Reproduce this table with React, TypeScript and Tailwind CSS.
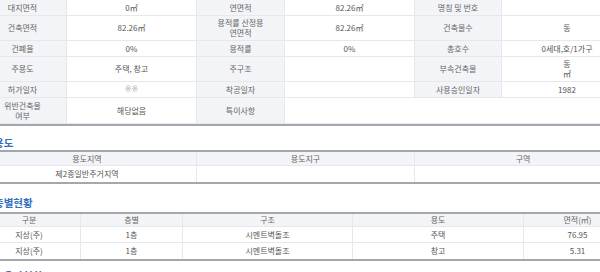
const font = {
  fontFamily: '"Noto Sans CJK KR", "Noto Sans", sans-serif',
};

const labelCls =
  "flex items-center justify-center text-center bg-[#f3f4f7] border-b border-r border-[#e7e8eb] text-[#666] leading-[10px]";
const valueCls =
  "flex items-center justify-center text-center bg-white border-b border-r border-[#e7e8eb] text-[#555] leading-[10px]";

function Label({ children }: { children: React.ReactNode }) {
  return <div className={labelCls}>{children}</div>;
}

function Value({
  children,
  span,
}: {
  children?: React.ReactNode;
  span?: boolean;
}) {
  return (
    <div className={span ? valueCls + " col-span-3" : valueCls}>{children}</div>
  );
}

function Heading({ children }: { children: React.ReactNode }) {
  return (
    <div className="ml-[-6px] text-[10.5px] font-bold leading-[14px] text-[#3470bd]">
      {children}
    </div>
  );
}

const zoneCols = ["용도지역", "용도지구", "구역"];
const zoneRow = ["제2종일반주거지역", "", ""];

const floorHead = ["구분", "층별", "구조", "용도", "면적(㎡)"];
const floorRows = [
  ["지상(주)", "1층", "시멘트벽돌조", "주택", "76.95"],
  ["지상(주)", "1층", "시멘트벽돌조", "창고", "5.31"],
];

export default function App() {
  return (
    <div
      className="h-[272px] w-[600px] overflow-hidden bg-white text-[8px]"
      style={font}
    >
      {/* 건축물 개요 */}
      <div className="ml-[-21px] w-[654px] border-b-2 border-[#a4a8ae]">
        <div className="grid grid-cols-[88px_130px_88px_130px_87px_131px] grid-rows-[16px_25px_16px_25px_16px_26px]">
          <Label>대지면적</Label>
          <Value>0㎡</Value>
          <Label>연면적</Label>
          <Value>82.26㎡</Value>
          <Label>명칭 및 번호</Label>
          <Value />

          <Label>건축면적</Label>
          <Value>82.26㎡</Value>
          <Label>
            용적률 산정용
            <br />
            연면적
          </Label>
          <Value>82.26㎡</Value>
          <Label>건축물수</Label>
          <Value>동</Value>

          <Label>건폐율</Label>
          <Value>0%</Value>
          <Label>용적률</Label>
          <Value>0%</Value>
          <Label>총호수</Label>
          <Value>0세대,호/1가구</Value>

          <Label>주용도</Label>
          <Value>주택, 창고</Value>
          <Label>주구조</Label>
          <Value />
          <Label>부속건축물</Label>
          <Value>
            동
            <br />㎡
          </Value>

          <Label>허가일자</Label>
          <Value>
            <span className="font-['DejaVu_Sans'] text-[#b5b5b5]">※※</span>
          </Value>
          <Label>착공일자</Label>
          <Value />
          <Label>사용승인일자</Label>
          <Value>1982</Value>

          <Label>
            위반건축물
            <br />
            여부
          </Label>
          <Value>해당없음</Value>
          <Label>특이사항</Label>
          <Value span />
        </div>
      </div>

      {/* 용도 */}
      <div className="pt-[10px]">
        <Heading>용도</Heading>
      </div>
      <div className="ml-[-22px] w-[654px] border-y-2 border-[#a4a8ae]">
        <div className="grid grid-cols-[219px_218px_217px] grid-rows-[14px_16px]">
          {zoneCols.map((c) => (
            <Label key={c}>{c}</Label>
          ))}
          {zoneRow.map((c, i) => (
            <div key={i} className={valueCls + " border-b-0"}>
              {c}
            </div>
          ))}
        </div>
      </div>

      {/* 층별현황 */}
      <div className="pt-[12px] pb-[2px]">
        <Heading>층별현황</Heading>
      </div>
      <div className="ml-[-22px] w-[654px] border-y-2 border-[#a4a8ae]">
        <div className="grid grid-cols-[103px_102px_170px_171px_108px] grid-rows-[13px_16px_16px]">
          {floorHead.map((c) => (
            <Label key={c}>{c}</Label>
          ))}
          {floorRows.map((row, r) =>
            row.map((c, i) => (
              <div
                key={r + "-" + i}
                className={r === floorRows.length - 1 ? valueCls + " border-b-0" : valueCls}
              >
                {c}
              </div>
            ))
          )}
        </div>
      </div>

      <div className="pt-[8px]">
        <Heading>소유자현황</Heading>
      </div>
    </div>
  );
}
